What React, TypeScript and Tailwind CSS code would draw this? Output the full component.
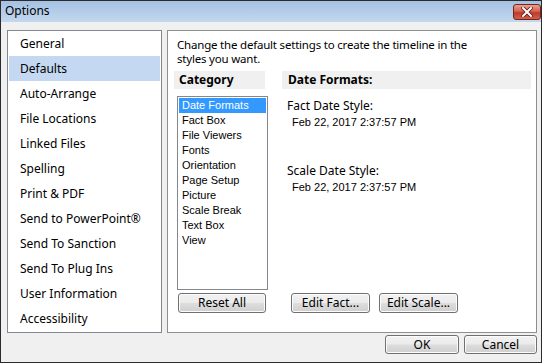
import React from 'react';

const pages = [
  'General',
  'Defaults',
  'Auto-Arrange',
  'File Locations',
  'Linked Files',
  'Spelling',
  'Print & PDF',
  'Send to PowerPoint®',
  'Send To Sanction',
  'Send To Plug Ins',
  'User Information',
  'Accessibility',
];

const categories = [
  'Date Formats',
  'Fact Box',
  'File Viewers',
  'Fonts',
  'Orientation',
  'Page Setup',
  'Picture',
  'Scale Break',
  'Text Box',
  'View',
];

function WinButton({ label, className }: { label: string; className: string }) {
  return (
    <button
      className={`flex items-center justify-center rounded-[3px] border border-[#707070] bg-[linear-gradient(to_bottom,#f2f2f2_0%,#ebebeb_48%,#dddddd_52%,#cfcfcf_100%)] text-[12px] leading-none text-black shadow-[inset_0_0_0_1px_#fcfcfc] ${className}`}
    >
      {label}
    </button>
  );
}

export default function App() {
  return (
    <div className="flex h-[363px] w-[542px] flex-col border border-[#2b2b2b] bg-[#f0f0f0] font-['Noto_Sans',sans-serif] text-black">
      {/* title bar */}
      <div className="flex h-[21px] items-start justify-between bg-[linear-gradient(to_bottom,#a4c1e2,#c3d8ee)]">
        <span className="pl-[4px] pt-[2px] text-[12px] leading-[16px]">Options</span>
        <div className="mt-[3px] flex h-[16px] w-[28px] items-center justify-center rounded-[3px] border border-[#7a2418] bg-[linear-gradient(to_bottom,#e8a093_0%,#d5624f_45%,#c0392b_55%,#d0604c_100%)]">
          <svg width="12" height="10" viewBox="0 0 12 10">
            <path d="M2 1 L10 9 M10 1 L2 9" stroke="#5a1a12" strokeWidth="3.6" strokeLinecap="square" />
            <path d="M2 1 L10 9 M10 1 L2 9" stroke="#ffffff" strokeWidth="2" strokeLinecap="square" />
          </svg>
        </div>
      </div>

      <div className="flex flex-1 flex-col pl-[6px] pr-[4px] pt-[8px]">
        <div className="flex h-[303px] gap-[5px]">
          {/* left page list */}
          <div className="w-[155px] border border-[#828790] bg-white px-[1px]">
            {pages.map((p) => (
              <div
                key={p}
                className={`flex h-[25px] items-center pl-[11px] text-[12px] ${p === 'Defaults' ? 'bg-[#c4d8f2]' : ''}`}
              >
                {p}
              </div>
            ))}
          </div>

          {/* right panel */}
          <div className="flex w-[370px] flex-col border border-[#8e8f8f] bg-white pl-[6px] pr-[5px] pt-[7px]">
            <p className="whitespace-nowrap pl-[3px] text-[11.5px] leading-[14px] tracking-[-0.2px]">
              Change the default settings to create the timeline in the
              <br />
              styles you want.
            </p>

            <div className="mt-[5px] flex gap-[14px]">
              <div className="flex w-[94px] flex-col">
                <div className="flex h-[18px] w-[91px] items-center bg-[#f0f0f0] pl-[5px] text-[12px] font-bold">
                  Category
                </div>
                <div className="ml-[3px] mt-[7px] h-[194px] w-[91px] border border-[#828790] p-[1px] font-['Liberation_Sans',sans-serif] text-[11px]">
                  {categories.map((c) => (
                    <div
                      key={c}
                      className={`flex h-[15px] items-center pl-[3px] ${c === 'Date Formats' ? 'bg-[#3399ff] text-white' : ''}`}
                    >
                      {c}
                    </div>
                  ))}
                </div>
                <WinButton label="Reset All" className="ml-[4px] mt-[3px] h-[20px] w-[88px]" />
              </div>

              <div className="flex w-[250px] flex-col">
                <div className="flex h-[18px] items-center bg-[#f0f0f0] pl-[6px] text-[12px] font-bold">
                  Date Formats:
                </div>
                <div className="flex h-[201px] flex-col pl-[5px] pt-[9px]">
                  <span className="text-[12px] leading-[16px]">Fact Date Style:</span>
                  <span className="pl-[5px] font-['Liberation_Sans',sans-serif] text-[11px] leading-[16px]">
                    Feb 22, 2017 2:37:57 PM
                  </span>
                  <span className="mt-[33px] text-[12px] leading-[16px]">Scale Date Style:</span>
                  <span className="pl-[5px] font-['Liberation_Sans',sans-serif] text-[11px] leading-[16px]">
                    Feb 22, 2017 2:37:57 PM
                  </span>
                </div>
                <div className="ml-[9px] mt-[3px] flex gap-[9px]">
                  <WinButton label="Edit Fact..." className="h-[20px] w-[79px]" />
                  <WinButton label="Edit Scale..." className="h-[20px] w-[79px]" />
                </div>
              </div>
            </div>
          </div>
        </div>

        <div className="mt-[2px] flex justify-end gap-[5px]">
          <WinButton label="OK" className="h-[19px] w-[74px]" />
          <WinButton label="Cancel" className="h-[19px] w-[73px]" />
        </div>
      </div>
    </div>
  );
}
